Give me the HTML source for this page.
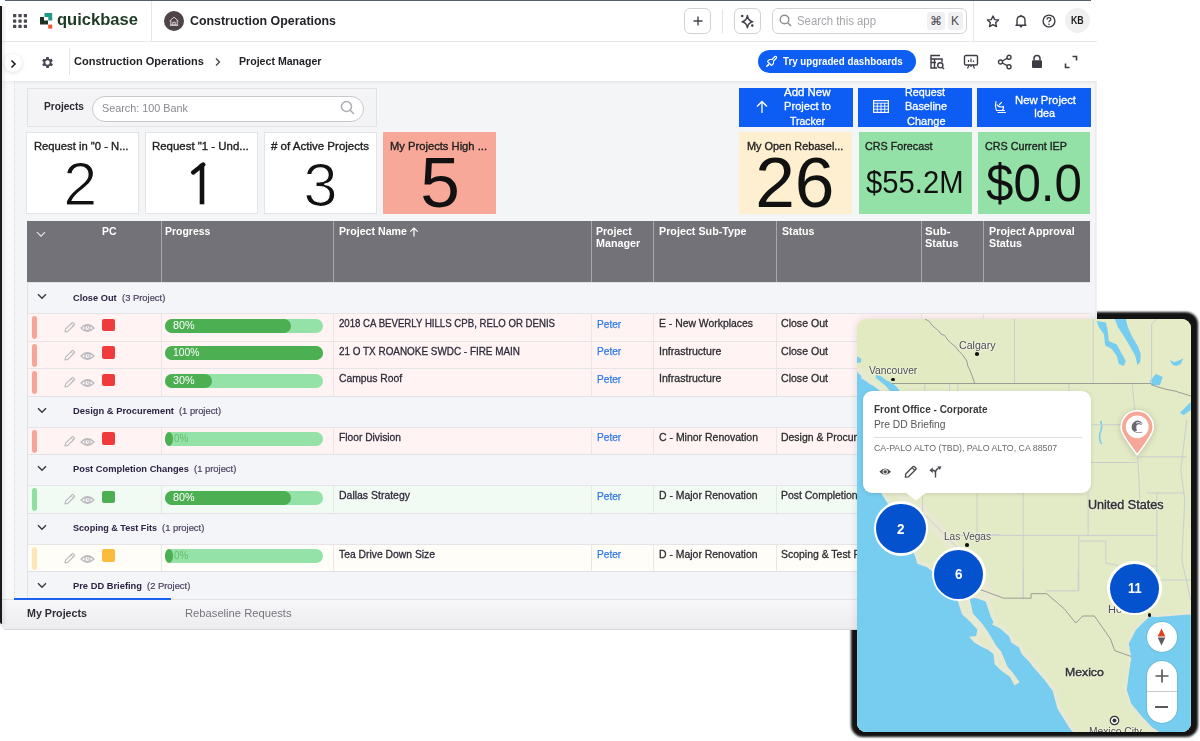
<!DOCTYPE html>
<html><head><meta charset="utf-8">
<style>
*{box-sizing:border-box;margin:0;padding:0}
html,body{width:1200px;height:741px;overflow:hidden;background:#fff;font-family:"Liberation Sans",sans-serif;color:#222}
.a{position:absolute}
.t{position:absolute;white-space:nowrap;line-height:1}
#app{position:absolute;left:0;top:0;width:1097px;height:630px;background:#f4f5f7;overflow:hidden;border-bottom-left-radius:7px}
</style></head><body>
<div class="a" style="left:851px;top:312px;width:346.5px;height:425px;background:#141414;border-radius:12px;filter:blur(1px)"></div>
<div id="app">
<div class="a" style="left:0px;top:0px;width:1097px;height:42px;background:#fff;border-bottom:1px solid #e8e8ea"></div>
<div class="a" style="left:0px;top:42px;width:1097px;height:39px;background:#fff"></div>
<div class="a" style="left:0px;top:81px;width:14px;height:549px;background:#f8f8fa"></div>
<div class="a" style="left:0px;top:81px;width:1097px;height:4px;background:linear-gradient(rgba(0,0,0,.035),rgba(0,0,0,0))"></div>
<div class="a" style="left:14px;top:81px;width:1083px;height:1px;border-top:1px dotted #d9d9dd"></div>
<div class="a" style="left:14px;top:81px;width:1px;height:548px;border-left:1px dotted #d9d9dd"></div>
<div class="a" style="left:1094.5px;top:81px;width:3px;height:548px;border-left:1px solid #ececef;border-right:1px dotted #c4c4c9;background:#f0f0f3"></div>
<svg class="a" style="left:13px;top:14px;fill:#4b4652" width="14" height="14" viewBox="0 0 14 14"><rect x="0.0" y="0.0" width="3.3" height="3.3" rx=".6"/><rect x="0.0" y="5.4" width="3.3" height="3.3" rx=".6"/><rect x="0.0" y="10.8" width="3.3" height="3.3" rx=".6"/><rect x="5.4" y="0.0" width="3.3" height="3.3" rx=".6"/><rect x="5.4" y="5.4" width="3.3" height="3.3" rx=".6"/><rect x="5.4" y="10.8" width="3.3" height="3.3" rx=".6"/><rect x="10.8" y="0.0" width="3.3" height="3.3" rx=".6"/><rect x="10.8" y="5.4" width="3.3" height="3.3" rx=".6"/><rect x="10.8" y="10.8" width="3.3" height="3.3" rx=".6"/></svg>
<svg class="a" style="left:40px;top:13px;" width="13" height="16" viewBox="0 0 13 16"><path d="M4.5 0H12.2V7.6H8.3V4H4.5Z" fill="#1f9a86"/><path d="M0 4H4V7.6H8V11.4H0Z" fill="#1c3522"/><rect x="8.2" y="11.6" width="4" height="4" fill="#f0582c"/></svg>
<div class="t" style="transform:scaleX(0.9741);transform-origin:0 0;left:57.00px;top:11px;font-size:17px;font-weight:bold;color:#1d3a22;">quickbase</div>
<div class="a" style="left:151px;top:0px;width:1px;height:41px;background:#e6e6e8"></div>
<svg class="a" style="left:164px;top:11px;" width="20" height="20" viewBox="0 0 20 20"><circle cx="10" cy="10" r="10" fill="#4e4347"/><path d="M5.5 10.2L10 6.2L14.5 10.2M6.8 9.2V14H13.2V9.2M8.8 14V11.2H11.2V14M5.8 14.3H14.2" stroke="#d9d2d4" stroke-width="1" fill="none"/></svg>
<div class="t" style="transform:scaleX(0.9535);transform-origin:0 0;left:190.00px;top:14px;font-size:13px;font-weight:bold;color:#242226;">Construction Operations</div>
<div class="a" style="left:684px;top:8px;width:27px;height:26px;border:1px solid #d2d2d6;border-radius:6px;background:#fff"></div>
<svg class="a" style="left:692.5px;top:16px;" width="10" height="10" viewBox="0 0 10 10"><path d="M5 .5V9.5M.5 5H9.5" stroke="#47434d" stroke-width="1.4"/></svg>
<div class="a" style="left:722px;top:9px;width:1px;height:24px;background:#e3e3e6"></div>
<div class="a" style="left:734px;top:8px;width:27px;height:26px;border:1px solid #d2d2d6;border-radius:6px;background:#fff"></div>
<svg class="a" style="left:740px;top:14px;" width="15" height="15" viewBox="0 0 15 15"><path d="M7.4 1.6Q8.1 6.6 12.6 7.8Q8.1 9 7.4 13.6Q6.7 9 2.2 7.8Q6.7 6.6 7.4 1.6Z" stroke="#47434d" stroke-width="1.6" fill="none" stroke-linejoin="round"/><circle cx="2.2" cy="2" r="1.3" fill="#47434d"/><circle cx="12.3" cy="11.6" r="1.3" fill="#47434d"/></svg>
<div class="a" style="left:772px;top:8px;width:195px;height:26px;border:1px solid #d2d2d6;border-radius:6px;background:#fff"></div>
<svg class="a" style="left:779px;top:14px;" width="13" height="13" viewBox="0 0 13 13"><circle cx="5.5" cy="5.5" r="4.3" stroke="#8e8c93" stroke-width="1.4" fill="none"/><path d="M8.7 8.7L12 12" stroke="#8e8c93" stroke-width="1.4"/></svg>
<div class="t" style="transform:scaleX(0.9473);transform-origin:0 0;left:797.00px;top:15px;font-size:12px;font-weight:normal;color:#a6a5aa;">Search this app</div>
<div class="a" style="left:927px;top:12px;width:18px;height:18px;background:#f0f0f2;border-radius:3px"></div>
<div class="t" style="left:930.00px;top:15px;font-size:12px;font-weight:normal;color:#4a4850;">&#8984;</div>
<div class="a" style="left:948px;top:12px;width:15px;height:18px;background:#f0f0f2;border-radius:3px"></div>
<div class="t" style="left:951.00px;top:15px;font-size:12px;font-weight:normal;color:#4a4850;">K</div>
<div class="a" style="left:973px;top:0px;width:1px;height:41px;background:#e6e6e8"></div>
<svg class="a" style="left:986px;top:15px;" width="14" height="13" viewBox="0 0 14 13"><path d="M7 1L8.7 4.6L12.6 5L9.7 7.6L10.5 11.6L7 9.6L3.5 11.6L4.3 7.6L1.4 5L5.3 4.6Z" stroke="#3e3b44" stroke-width="1.4" fill="none" stroke-linejoin="round"/></svg>
<svg class="a" style="left:1015px;top:14px;" width="12" height="14" viewBox="0 0 12 14"><path d="M2 10.5V6.5Q2 2.3 6 2.3Q10 2.3 10 6.5V10.5L11 11.2H1Z" stroke="#3e3b44" stroke-width="1.4" fill="none" stroke-linejoin="round"/><path d="M4.8 12.6H7.2" stroke="#3e3b44" stroke-width="1.6"/><path d="M6 1V2.3" stroke="#3e3b44" stroke-width="1.4"/></svg>
<svg class="a" style="left:1042px;top:14px;" width="14" height="14" viewBox="0 0 14 14"><circle cx="7" cy="7" r="5.9" stroke="#3e3b44" stroke-width="1.4" fill="none"/><path d="M5.1 5.4Q5.1 3.6 7 3.6Q8.9 3.6 8.9 5.2Q8.9 6.3 7.6 6.9Q7 7.2 7 8.3" stroke="#3e3b44" stroke-width="1.3" fill="none"/><circle cx="7" cy="10.2" r=".8" fill="#3e3b44"/></svg>
<div class="a" style="left:1065px;top:8px;width:25px;height:25px;border-radius:50%;background:#f0f0f1"></div>
<div class="t" style="transform:scaleX(0.8787);transform-origin:0 0;left:1071.30px;top:16px;font-size:10px;font-weight:bold;color:#1b1b1b;">KB</div>
<div class="a" style="left:4px;top:54.3px;width:18px;height:18px;border-radius:50%;background:#fff;box-shadow:0 1px 4px rgba(0,0,0,.14)"></div>
<svg class="a" style="left:10px;top:58.5px;" width="7" height="10" viewBox="0 0 7 10"><path d="M1.5 1.5L5 5L1.5 8.5" stroke="#1e1e22" stroke-width="1.6" fill="none"/></svg>
<svg class="a" style="left:39.5px;top:54.8px;" width="15" height="15" viewBox="0 0 24 24"><path fill="#4b4652" d="M19.4 13a7.5 7.5 0 0 0 0-2l2.1-1.6-2-3.5-2.5 1a7.6 7.6 0 0 0-1.7-1L15 3.3h-4l-.4 2.6a7.6 7.6 0 0 0-1.7 1l-2.5-1-2 3.5L6.6 11a7.5 7.5 0 0 0 0 2l-2.1 1.6 2 3.5 2.5-1a7.6 7.6 0 0 0 1.7 1l.4 2.6h4l.4-2.6a7.6 7.6 0 0 0 1.7-1l2.5 1 2-3.5zM13 15.5a3.5 3.5 0 1 1 0-7 3.5 3.5 0 0 1 0 7z" transform="translate(-1 0)"/></svg>
<div class="a" style="left:69px;top:48px;width:1px;height:27px;background:#e4e4e6"></div>
<div class="t" style="transform:scaleX(0.9597);transform-origin:0 0;left:74.00px;top:56px;font-size:11.5px;font-weight:bold;color:#242226;">Construction Operations</div>
<svg class="a" style="left:214px;top:56.8px;" width="8" height="10" viewBox="0 0 8 10"><path d="M2 1.5L5.5 5L2 8.5" stroke="#4b4652" stroke-width="1.4" fill="none"/></svg>
<div class="t" style="transform:scaleX(0.9219);transform-origin:0 0;left:238.50px;top:56px;font-size:11.5px;font-weight:bold;color:#242226;">Project Manager</div>
<div class="a" style="left:758px;top:50px;width:158px;height:23px;border-radius:12px;background:#0e5ef3"></div>
<svg class="a" style="left:765px;top:55px;" width="13" height="13" viewBox="0 0 13 13"><path d="M4.5 8.5L2.5 6.5L4.5 4.5H7L10 1.5Q12 1 11.5 3L8.5 6V8.5L6.5 10.5ZM4.2 9.2Q2.5 9 1.5 11.5Q4 10.5 3.8 8.8" stroke="#fff" stroke-width="1.1" fill="none" stroke-linejoin="round"/></svg>
<div class="t" style="transform:scaleX(0.8861);transform-origin:0 0;left:783.30px;top:56px;font-size:11px;font-weight:bold;color:#fff;">Try upgraded dashboards</div>
<svg class="a" style="left:929px;top:54px;" width="16" height="16" viewBox="0 0 16 16"><path d="M11 1.5H2V14H8M2 5H13V8M2 8.5H7M5.5 5V14" stroke="#3e3b44" stroke-width="1.4" fill="none"/><circle cx="11.3" cy="11.3" r="2.6" stroke="#3e3b44" stroke-width="1.4" fill="none"/><path d="M13.2 13.2L15 15" stroke="#3e3b44" stroke-width="1.4"/></svg>
<svg class="a" style="left:963px;top:54px;" width="16" height="16" viewBox="0 0 16 16"><rect x="1.5" y="1.5" width="13" height="9.5" rx="1.3" stroke="#3e3b44" stroke-width="1.4" fill="none"/><path d="M5.5 8V6M8 8V4.5M10.5 8V6.5M6 11L4.5 14.5M10 11L11.5 14.5M8 11V13" stroke="#3e3b44" stroke-width="1.2"/></svg>
<svg class="a" style="left:997px;top:54px;" width="16" height="16" viewBox="0 0 16 16"><circle cx="12" cy="3.3" r="2" stroke="#3e3b44" stroke-width="1.4" fill="none"/><circle cx="3.5" cy="8" r="2" stroke="#3e3b44" stroke-width="1.4" fill="none"/><circle cx="12" cy="12.7" r="2" stroke="#3e3b44" stroke-width="1.4" fill="none"/><path d="M5.3 7L10.2 4.3M5.3 9L10.2 11.7" stroke="#3e3b44" stroke-width="1.4"/></svg>
<svg class="a" style="left:1031px;top:54px;" width="12" height="15" viewBox="0 0 12 15"><path d="M3 6.5V4.5Q3 1.5 6 1.5Q9 1.5 9 4.5V6.5" stroke="#3e3b44" stroke-width="1.5" fill="none"/><rect x="1" y="6.2" width="10" height="7.8" rx="1" fill="#3e3b44"/></svg>
<svg class="a" style="left:1064px;top:55px;" width="14" height="14" viewBox="0 0 14 14"><path d="M8.5 1.5H12.5V5.5M5.5 12.5H1.5V8.5" stroke="#3e3b44" stroke-width="1.6" fill="none"/></svg>
<div class="a" style="left:26.5px;top:87.5px;width:350px;height:39px;background:#f4f4f6;border:1px solid #e3e3e7"></div>
<div class="t" style="transform:scaleX(0.9388);transform-origin:0 0;left:44.40px;top:101px;font-size:10.8px;font-weight:bold;color:#2a2830;">Projects</div>
<div class="a" style="left:91.5px;top:95.5px;width:272.5px;height:26px;background:#fff;border:1px solid #c9c8cd;border-radius:13px"></div>
<div class="t" style="transform:scaleX(0.9670);transform-origin:0 0;left:101.60px;top:103px;font-size:11.2px;font-weight:normal;color:#8a8990;">Search: 100 Bank</div>
<svg class="a" style="left:340px;top:100px;" width="15" height="15" viewBox="0 0 15 15"><circle cx="6.5" cy="6.5" r="5" stroke="#aeadb3" stroke-width="1.5" fill="none"/><path d="M10.2 10.2L13.5 13.5" stroke="#aeadb3" stroke-width="1.6" stroke-linecap="round"/></svg>
<div class="a" style="left:739.2px;top:87.5px;width:113.5px;height:39px;background:#0d5cf4"></div>
<div class="a" style="left:858.2px;top:87.5px;width:113.5px;height:39px;background:#0d5cf4"></div>
<div class="a" style="left:977.2px;top:87.5px;width:113.5px;height:39px;background:#0d5cf4"></div>
<svg class="a" style="left:755px;top:100px;" width="14" height="14" viewBox="0 0 14 14"><path d="M7 13V1.5M2 6.5L7 1.5L12 6.5" stroke="#fff" stroke-width="1.3" fill="none"/></svg>
<div class="t" style="transform:scaleX(1.0613);transform-origin:0 0;left:783.70px;top:87px;font-size:10.8px;font-weight:normal;color:#fff;-webkit-text-stroke:.3px #fff;">Add New</div>
<div class="t" style="transform:scaleX(1.0305);transform-origin:0 0;left:783.50px;top:101px;font-size:10.8px;font-weight:normal;color:#fff;-webkit-text-stroke:.3px #fff;">Project to</div>
<div class="t" style="transform:scaleX(0.9668);transform-origin:0 0;left:789.50px;top:116px;font-size:10.8px;font-weight:normal;color:#fff;-webkit-text-stroke:.3px #fff;">Tracker</div>
<svg class="a" style="left:873px;top:100px;" width="16" height="13" viewBox="0 0 16 13"><rect x=".6" y=".6" width="14.8" height="11.8" fill="none" stroke="#fff" stroke-width="1.2"/><path d="M.6 3.2H15.4M.6 6.2H15.4M.6 9.2H15.4M4.3 3V12.4M8 3V12.4M11.7 3V12.4" stroke="#fff" stroke-width=".9"/></svg>
<div class="t" style="transform:scaleX(0.9946);transform-origin:0 0;left:905.00px;top:87px;font-size:10.8px;font-weight:normal;color:#fff;-webkit-text-stroke:.3px #fff;">Request</div>
<div class="t" style="transform:scaleX(1.0140);transform-origin:0 0;left:905.40px;top:101px;font-size:10.8px;font-weight:normal;color:#fff;-webkit-text-stroke:.3px #fff;">Baseline</div>
<div class="t" style="transform:scaleX(1.0178);transform-origin:0 0;left:906.50px;top:116px;font-size:10.8px;font-weight:normal;color:#fff;-webkit-text-stroke:.3px #fff;">Change</div>
<svg class="a" style="left:993px;top:100px;" width="14" height="14" viewBox="0 0 14 14"><path d="M3 1.5Q1.5 6 3.5 10.5H11.5M5 12.5H12.5M4 5Q7 8 10.5 6.5Q11 9 9 10.5M6.5 4.5L8.5 2.5" stroke="#fff" stroke-width="1.1" fill="none" stroke-linecap="round"/></svg>
<div class="t" style="transform:scaleX(1.0481);transform-origin:0 0;left:1014.50px;top:95px;font-size:10.8px;font-weight:normal;color:#fff;-webkit-text-stroke:.3px #fff;">New Project</div>
<div class="t" style="transform:scaleX(0.9993);transform-origin:0 0;left:1033.50px;top:108px;font-size:10.8px;font-weight:normal;color:#fff;-webkit-text-stroke:.3px #fff;">Idea</div>
<div class="a" style="left:739px;top:126.6px;width:352px;height:5px;background:#f4f5f7"></div>
<div class="a" style="left:26.3px;top:132.3px;width:113px;height:82px;background:#fff;border:1px solid #e3e4e8"></div>
<div class="t" style="transform:scaleX(1.0038);transform-origin:0 0;left:33.70px;top:141px;font-size:11.2px;font-weight:normal;color:#1e1e1e;-webkit-text-stroke:.35px #1e1e1e;">Request in "0 - N...</div>
<div class="t" style="left:63.22px;top:154px;font-size:61.1px;font-weight:normal;color:#111;-webkit-text-stroke:1.2px #fff;">2</div>
<div class="a" style="left:145.3px;top:132.3px;width:113px;height:82px;background:#fff;border:1px solid #e3e4e8"></div>
<div class="t" style="transform:scaleX(1.0215);transform-origin:0 0;left:152.00px;top:141px;font-size:11.2px;font-weight:normal;color:#1e1e1e;-webkit-text-stroke:.35px #1e1e1e;">Request "1 - Und...</div>
<svg class="a" style="left:190px;top:162px;" width="20" height="44" viewBox="0 0 20 44"><path d="M12 1.8V42.3" stroke="#111" stroke-width="4.6"/><path d="M13.2 2.6L3.2 10.4" stroke="#111" stroke-width="4.4" stroke-linecap="round"/></svg>
<div class="a" style="left:264.3px;top:132.3px;width:113px;height:82px;background:#fff;border:1px solid #e3e4e8"></div>
<div class="t" style="transform:scaleX(1.0301);transform-origin:0 0;left:271.00px;top:141px;font-size:11.2px;font-weight:normal;color:#1e1e1e;-webkit-text-stroke:.35px #1e1e1e;"># of Active Projects</div>
<div class="t" style="left:303.62px;top:155px;font-size:61.1px;font-weight:normal;color:#111;-webkit-text-stroke:1.2px #fff;">3</div>
<div class="a" style="left:383.3px;top:132.3px;width:113px;height:82px;background:#f8a898;border:1px solid #f8a898"></div>
<div class="t" style="transform:scaleX(1.0002);transform-origin:0 0;left:390.00px;top:141px;font-size:11.2px;font-weight:normal;color:#1e1e1e;-webkit-text-stroke:.35px #1e1e1e;">My Projects High ...</div>
<div class="t" style="left:420.21px;top:147px;font-size:71.3px;font-weight:normal;color:#111;">5</div>
<div class="a" style="left:739.3px;top:132.3px;width:113px;height:82px;background:#fdefcf;border:1px solid #fdefcf"></div>
<div class="t" style="transform:scaleX(0.9750);transform-origin:0 0;left:746.60px;top:141px;font-size:11.2px;font-weight:normal;color:#1e1e1e;-webkit-text-stroke:.35px #1e1e1e;">My Open Rebasel...</div>
<div class="t" style="left:755.21px;top:147px;font-size:71.3px;font-weight:normal;color:#111;">26</div>
<div class="a" style="left:858.5px;top:132.3px;width:113px;height:82px;background:#94e1a8"></div>
<div class="t" style="transform:scaleX(0.9623);transform-origin:0 0;left:865.40px;top:141px;font-size:11.2px;font-weight:normal;color:#1e1e1e;-webkit-text-stroke:.35px #1e1e1e;">CRS Forecast</div>
<div class="t" style="transform:scaleX(0.9584);transform-origin:0 0;left:865.50px;top:167px;font-size:30.5px;font-weight:normal;color:#111;">$55.2M</div>
<div class="a" style="left:977.5px;top:132.3px;width:112.5px;height:82px;background:#94e1a8"></div>
<div class="t" style="transform:scaleX(0.9626);transform-origin:0 0;left:984.70px;top:141px;font-size:11.2px;font-weight:normal;color:#1e1e1e;-webkit-text-stroke:.35px #1e1e1e;">CRS Current IEP</div>
<div class="t" style="transform:scaleX(0.9394);transform-origin:0 0;left:985.50px;top:157px;font-size:52.5px;font-weight:normal;color:#111;">$0.0</div>
<div class="a" style="left:26.5px;top:221.2px;width:1063.5px;height:60.8px;background:#737278"></div>
<div class="a" style="left:160.5px;top:221.2px;width:1px;height:60.8px;background:#a9a8ae"></div>
<div class="a" style="left:333.3px;top:221.2px;width:1px;height:60.8px;background:#a9a8ae"></div>
<div class="a" style="left:590.7px;top:221.2px;width:1px;height:60.8px;background:#a9a8ae"></div>
<div class="a" style="left:653.2px;top:221.2px;width:1px;height:60.8px;background:#a9a8ae"></div>
<div class="a" style="left:775.8px;top:221.2px;width:1px;height:60.8px;background:#a9a8ae"></div>
<div class="a" style="left:920.5px;top:221.2px;width:1px;height:60.8px;background:#a9a8ae"></div>
<div class="a" style="left:983.4px;top:221.2px;width:1px;height:60.8px;background:#a9a8ae"></div>
<svg class="a" style="left:36px;top:231px;" width="10" height="7" viewBox="0 0 10 7"><path d="M1 1.2L5 5.2L9 1.2" stroke="#e6e6ea" stroke-width="1.2" fill="none"/></svg>
<div class="t" style="transform:scaleX(0.9851);transform-origin:0 0;left:102.00px;top:226px;font-size:10.6px;font-weight:bold;color:#fff;">PC</div>
<div class="t" style="transform:scaleX(0.9883);transform-origin:0 0;left:165.30px;top:226px;font-size:10.6px;font-weight:bold;color:#fff;">Progress</div>
<div class="t" style="transform:scaleX(1.0042);transform-origin:0 0;left:339.00px;top:226px;font-size:10.6px;font-weight:bold;color:#fff;">Project Name</div>
<svg class="a" style="left:409px;top:227px;" width="10" height="10" viewBox="0 0 10 10"><path d="M5 9.5V1M1.3 4.7L5 1L8.7 4.7" stroke="#fff" stroke-width="1.2" fill="none"/></svg>
<div class="t" style="transform:scaleX(0.9938);transform-origin:0 0;left:596.30px;top:226px;font-size:10.6px;font-weight:bold;color:#fff;">Project</div>
<div class="t" style="transform:scaleX(1.0143);transform-origin:0 0;left:596.30px;top:238px;font-size:10.6px;font-weight:bold;color:#fff;">Manager</div>
<div class="t" style="transform:scaleX(1.0145);transform-origin:0 0;left:659.40px;top:226px;font-size:10.6px;font-weight:bold;color:#fff;">Project Sub-Type</div>
<div class="t" style="transform:scaleX(1.0034);transform-origin:0 0;left:781.50px;top:226px;font-size:10.6px;font-weight:bold;color:#fff;">Status</div>
<div class="t" style="transform:scaleX(1.0872);transform-origin:0 0;left:925.40px;top:226px;font-size:10.6px;font-weight:bold;color:#fff;">Sub-</div>
<div class="t" style="transform:scaleX(1.0373);transform-origin:0 0;left:925.40px;top:238px;font-size:10.6px;font-weight:bold;color:#fff;">Status</div>
<div class="t" style="transform:scaleX(1.0167);transform-origin:0 0;left:989.00px;top:226px;font-size:10.6px;font-weight:bold;color:#fff;">Project Approval</div>
<div class="t" style="transform:scaleX(1.0188);transform-origin:0 0;left:989.00px;top:238px;font-size:10.6px;font-weight:bold;color:#fff;">Status</div>
<div class="a" style="left:26.5px;top:282.0px;width:1063.5px;height:31px;background:#f4f5f8"></div>
<div class="a" style="left:26.5px;top:282.0px;width:1063.5px;height:1px;background:#e2e2e6"></div>
<svg class="a" style="left:36.5px;top:293.0px;" width="10" height="7" viewBox="0 0 10 7"><path d="M1 1.2L5 5.2L9 1.2" stroke="#3a3840" stroke-width="1.4" fill="none"/></svg>
<div class="t" style="transform:scaleX(0.9421);transform-origin:0 0;left:73.40px;top:293px;font-size:9.8px;font-weight:bold;color:#2d2344;">Close Out</div>
<div class="t" style="transform:scaleX(0.9582);transform-origin:0 0;left:121.50px;top:293px;font-size:9.8px;font-weight:normal;color:#4a4060;-webkit-text-stroke:.2px #4a4060;">(3 Project)</div>
<div class="a" style="left:26.5px;top:313.0px;width:1063.5px;height:27.5px;background:#fff4f3"></div>
<div class="a" style="left:26.5px;top:313.0px;width:1063.5px;height:1px;background:#e6e4e7"></div>
<div class="a" style="left:160.5px;top:313.0px;width:1px;height:27.5px;background:#e8e6e8"></div>
<div class="a" style="left:333.3px;top:313.0px;width:1px;height:27.5px;background:#e8e6e8"></div>
<div class="a" style="left:590.7px;top:313.0px;width:1px;height:27.5px;background:#e8e6e8"></div>
<div class="a" style="left:653.2px;top:313.0px;width:1px;height:27.5px;background:#e8e6e8"></div>
<div class="a" style="left:775.8px;top:313.0px;width:1px;height:27.5px;background:#e8e6e8"></div>
<div class="a" style="left:920.5px;top:313.0px;width:1px;height:27.5px;background:#e8e6e8"></div>
<div class="a" style="left:983.4px;top:313.0px;width:1px;height:27.5px;background:#e8e6e8"></div>
<div class="a" style="left:32.3px;top:316.0px;width:4.8px;height:23px;background:#f6a596;border-radius:2.4px"></div>
<svg class="a" style="left:63px;top:322.0px;" width="13" height="11" viewBox="0 0 13 11"><path d="M2 9.8L2.6 7.2L9 0.8Q9.7 .2 10.4 .8L11.2 1.6Q11.8 2.3 11.2 3L4.8 9.4L2.2 10Z" stroke="#b9b8bd" stroke-width="1.1" fill="none" stroke-linejoin="round"/><path d="M8.2 1.8L10.2 3.8" stroke="#b9b8bd" stroke-width="1"/></svg>
<svg class="a" style="left:79.5px;top:323.0px;" width="15" height="10" viewBox="0 0 15 10"><path d="M1 5Q7.5 -1.5 14 5Q7.5 11.5 1 5Z" stroke="#b9b8bd" stroke-width="1.2" fill="none"/><circle cx="7.5" cy="5" r="2.6" stroke="#b9b8bd" stroke-width="1.1" fill="none"/><path d="M7.5 3.6V5.2H8.8" stroke="#b9b8bd" stroke-width=".9" fill="none"/></svg>
<div class="a" style="left:102.1px;top:318.7px;width:13px;height:12.8px;background:#ef3b3b;border-radius:2px"></div>
<div class="a" style="left:164.8px;top:318.7px;width:158px;height:14.3px;background:#94e2a7;border-radius:7.2px"></div>
<div class="a" style="left:164.8px;top:318.7px;width:126.4px;height:14.3px;background:#4caf51;border-radius:7.2px"></div>
<div class="t" style="transform:scaleX(1.0386);transform-origin:0 0;left:173.20px;top:321px;font-size:10.4px;font-weight:normal;color:#fff;">80%</div>
<div class="t" style="transform:scaleX(0.8759);transform-origin:0 0;left:338.80px;top:318px;font-size:11px;font-weight:normal;color:#2e2a3a;-webkit-text-stroke:.3px #2e2a3a;">2018 CA BEVERLY HILLS CPB, RELO OR DENIS</div>
<div class="t" style="transform:scaleX(0.9203);transform-origin:0 0;left:596.80px;top:319px;font-size:11px;font-weight:normal;color:#2f7ae5;-webkit-text-stroke:.25px #2f7ae5;">Peter</div>
<div class="t" style="transform:scaleX(0.9453);transform-origin:0 0;left:659.20px;top:318px;font-size:11px;font-weight:normal;color:#2c2c30;-webkit-text-stroke:.3px #2c2c30;">E - New Workplaces</div>
<div class="t" style="transform:scaleX(0.9607);transform-origin:0 0;left:781.20px;top:318px;font-size:11px;font-weight:normal;color:#2c2c30;-webkit-text-stroke:.3px #2c2c30;">Close Out</div>
<div class="a" style="left:26.5px;top:340.5px;width:1063.5px;height:27.5px;background:#fff4f3"></div>
<div class="a" style="left:26.5px;top:340.5px;width:1063.5px;height:1px;background:#e6e4e7"></div>
<div class="a" style="left:160.5px;top:340.5px;width:1px;height:27.5px;background:#e8e6e8"></div>
<div class="a" style="left:333.3px;top:340.5px;width:1px;height:27.5px;background:#e8e6e8"></div>
<div class="a" style="left:590.7px;top:340.5px;width:1px;height:27.5px;background:#e8e6e8"></div>
<div class="a" style="left:653.2px;top:340.5px;width:1px;height:27.5px;background:#e8e6e8"></div>
<div class="a" style="left:775.8px;top:340.5px;width:1px;height:27.5px;background:#e8e6e8"></div>
<div class="a" style="left:920.5px;top:340.5px;width:1px;height:27.5px;background:#e8e6e8"></div>
<div class="a" style="left:983.4px;top:340.5px;width:1px;height:27.5px;background:#e8e6e8"></div>
<div class="a" style="left:32.3px;top:343.5px;width:4.8px;height:23px;background:#f6a596;border-radius:2.4px"></div>
<svg class="a" style="left:63px;top:349.5px;" width="13" height="11" viewBox="0 0 13 11"><path d="M2 9.8L2.6 7.2L9 0.8Q9.7 .2 10.4 .8L11.2 1.6Q11.8 2.3 11.2 3L4.8 9.4L2.2 10Z" stroke="#b9b8bd" stroke-width="1.1" fill="none" stroke-linejoin="round"/><path d="M8.2 1.8L10.2 3.8" stroke="#b9b8bd" stroke-width="1"/></svg>
<svg class="a" style="left:79.5px;top:350.5px;" width="15" height="10" viewBox="0 0 15 10"><path d="M1 5Q7.5 -1.5 14 5Q7.5 11.5 1 5Z" stroke="#b9b8bd" stroke-width="1.2" fill="none"/><circle cx="7.5" cy="5" r="2.6" stroke="#b9b8bd" stroke-width="1.1" fill="none"/><path d="M7.5 3.6V5.2H8.8" stroke="#b9b8bd" stroke-width=".9" fill="none"/></svg>
<div class="a" style="left:102.1px;top:346.2px;width:13px;height:12.8px;background:#ef3b3b;border-radius:2px"></div>
<div class="a" style="left:164.8px;top:346.2px;width:158px;height:14.3px;background:#94e2a7;border-radius:7.2px"></div>
<div class="a" style="left:164.8px;top:346.2px;width:158.0px;height:14.3px;background:#4caf51;border-radius:7.2px"></div>
<div class="t" style="transform:scaleX(0.9933);transform-origin:0 0;left:173.20px;top:348px;font-size:10.4px;font-weight:normal;color:#fff;">100%</div>
<div class="t" style="transform:scaleX(0.9010);transform-origin:0 0;left:338.80px;top:346px;font-size:11px;font-weight:normal;color:#2e2a3a;-webkit-text-stroke:.3px #2e2a3a;">21 O TX ROANOKE SWDC - FIRE MAIN</div>
<div class="t" style="transform:scaleX(0.9203);transform-origin:0 0;left:596.80px;top:346px;font-size:11px;font-weight:normal;color:#2f7ae5;-webkit-text-stroke:.25px #2f7ae5;">Peter</div>
<div class="t" style="transform:scaleX(0.9612);transform-origin:0 0;left:659.20px;top:346px;font-size:11px;font-weight:normal;color:#2c2c30;-webkit-text-stroke:.3px #2c2c30;">Infrastructure</div>
<div class="t" style="transform:scaleX(0.9607);transform-origin:0 0;left:781.20px;top:346px;font-size:11px;font-weight:normal;color:#2c2c30;-webkit-text-stroke:.3px #2c2c30;">Close Out</div>
<div class="a" style="left:26.5px;top:368.0px;width:1063.5px;height:27.5px;background:#fff4f3"></div>
<div class="a" style="left:26.5px;top:368.0px;width:1063.5px;height:1px;background:#e6e4e7"></div>
<div class="a" style="left:160.5px;top:368.0px;width:1px;height:27.5px;background:#e8e6e8"></div>
<div class="a" style="left:333.3px;top:368.0px;width:1px;height:27.5px;background:#e8e6e8"></div>
<div class="a" style="left:590.7px;top:368.0px;width:1px;height:27.5px;background:#e8e6e8"></div>
<div class="a" style="left:653.2px;top:368.0px;width:1px;height:27.5px;background:#e8e6e8"></div>
<div class="a" style="left:775.8px;top:368.0px;width:1px;height:27.5px;background:#e8e6e8"></div>
<div class="a" style="left:920.5px;top:368.0px;width:1px;height:27.5px;background:#e8e6e8"></div>
<div class="a" style="left:983.4px;top:368.0px;width:1px;height:27.5px;background:#e8e6e8"></div>
<div class="a" style="left:32.3px;top:371.0px;width:4.8px;height:23px;background:#f6a596;border-radius:2.4px"></div>
<svg class="a" style="left:63px;top:377.0px;" width="13" height="11" viewBox="0 0 13 11"><path d="M2 9.8L2.6 7.2L9 0.8Q9.7 .2 10.4 .8L11.2 1.6Q11.8 2.3 11.2 3L4.8 9.4L2.2 10Z" stroke="#b9b8bd" stroke-width="1.1" fill="none" stroke-linejoin="round"/><path d="M8.2 1.8L10.2 3.8" stroke="#b9b8bd" stroke-width="1"/></svg>
<svg class="a" style="left:79.5px;top:378.0px;" width="15" height="10" viewBox="0 0 15 10"><path d="M1 5Q7.5 -1.5 14 5Q7.5 11.5 1 5Z" stroke="#b9b8bd" stroke-width="1.2" fill="none"/><circle cx="7.5" cy="5" r="2.6" stroke="#b9b8bd" stroke-width="1.1" fill="none"/><path d="M7.5 3.6V5.2H8.8" stroke="#b9b8bd" stroke-width=".9" fill="none"/></svg>
<div class="a" style="left:102.1px;top:373.7px;width:13px;height:12.8px;background:#ef3b3b;border-radius:2px"></div>
<div class="a" style="left:164.8px;top:373.7px;width:158px;height:14.3px;background:#94e2a7;border-radius:7.2px"></div>
<div class="a" style="left:164.8px;top:373.7px;width:47.4px;height:14.3px;background:#4caf51;border-radius:7.2px"></div>
<div class="t" style="transform:scaleX(1.0386);transform-origin:0 0;left:173.20px;top:376px;font-size:10.4px;font-weight:normal;color:#fff;">30%</div>
<div class="t" style="transform:scaleX(0.9396);transform-origin:0 0;left:338.80px;top:373px;font-size:11px;font-weight:normal;color:#2e2a3a;-webkit-text-stroke:.3px #2e2a3a;">Campus Roof</div>
<div class="t" style="transform:scaleX(0.9203);transform-origin:0 0;left:596.80px;top:374px;font-size:11px;font-weight:normal;color:#2f7ae5;-webkit-text-stroke:.25px #2f7ae5;">Peter</div>
<div class="t" style="transform:scaleX(0.9612);transform-origin:0 0;left:659.20px;top:373px;font-size:11px;font-weight:normal;color:#2c2c30;-webkit-text-stroke:.3px #2c2c30;">Infrastructure</div>
<div class="t" style="transform:scaleX(0.9607);transform-origin:0 0;left:781.20px;top:373px;font-size:11px;font-weight:normal;color:#2c2c30;-webkit-text-stroke:.3px #2c2c30;">Close Out</div>
<div class="a" style="left:26.5px;top:395.5px;width:1063.5px;height:31px;background:#f4f5f8"></div>
<div class="a" style="left:26.5px;top:395.5px;width:1063.5px;height:1px;background:#e2e2e6"></div>
<svg class="a" style="left:36.5px;top:406.5px;" width="10" height="7" viewBox="0 0 10 7"><path d="M1 1.2L5 5.2L9 1.2" stroke="#3a3840" stroke-width="1.4" fill="none"/></svg>
<div class="t" style="transform:scaleX(0.9562);transform-origin:0 0;left:73.40px;top:406px;font-size:9.8px;font-weight:bold;color:#2d2344;">Design &amp; Procurement</div>
<div class="t" style="transform:scaleX(0.9522);transform-origin:0 0;left:179.00px;top:406px;font-size:9.8px;font-weight:normal;color:#4a4060;-webkit-text-stroke:.2px #4a4060;">(1 project)</div>
<div class="a" style="left:26.5px;top:426.5px;width:1063.5px;height:27.5px;background:#fff4f3"></div>
<div class="a" style="left:26.5px;top:426.5px;width:1063.5px;height:1px;background:#e6e4e7"></div>
<div class="a" style="left:160.5px;top:426.5px;width:1px;height:27.5px;background:#e8e6e8"></div>
<div class="a" style="left:333.3px;top:426.5px;width:1px;height:27.5px;background:#e8e6e8"></div>
<div class="a" style="left:590.7px;top:426.5px;width:1px;height:27.5px;background:#e8e6e8"></div>
<div class="a" style="left:653.2px;top:426.5px;width:1px;height:27.5px;background:#e8e6e8"></div>
<div class="a" style="left:775.8px;top:426.5px;width:1px;height:27.5px;background:#e8e6e8"></div>
<div class="a" style="left:920.5px;top:426.5px;width:1px;height:27.5px;background:#e8e6e8"></div>
<div class="a" style="left:983.4px;top:426.5px;width:1px;height:27.5px;background:#e8e6e8"></div>
<div class="a" style="left:32.3px;top:429.5px;width:4.8px;height:23px;background:#f6a596;border-radius:2.4px"></div>
<svg class="a" style="left:63px;top:435.5px;" width="13" height="11" viewBox="0 0 13 11"><path d="M2 9.8L2.6 7.2L9 0.8Q9.7 .2 10.4 .8L11.2 1.6Q11.8 2.3 11.2 3L4.8 9.4L2.2 10Z" stroke="#b9b8bd" stroke-width="1.1" fill="none" stroke-linejoin="round"/><path d="M8.2 1.8L10.2 3.8" stroke="#b9b8bd" stroke-width="1"/></svg>
<svg class="a" style="left:79.5px;top:436.5px;" width="15" height="10" viewBox="0 0 15 10"><path d="M1 5Q7.5 -1.5 14 5Q7.5 11.5 1 5Z" stroke="#b9b8bd" stroke-width="1.2" fill="none"/><circle cx="7.5" cy="5" r="2.6" stroke="#b9b8bd" stroke-width="1.1" fill="none"/><path d="M7.5 3.6V5.2H8.8" stroke="#b9b8bd" stroke-width=".9" fill="none"/></svg>
<div class="a" style="left:102.1px;top:432.2px;width:13px;height:12.8px;background:#ef3b3b;border-radius:2px"></div>
<div class="a" style="left:164.8px;top:432.2px;width:158px;height:14.3px;background:#94e2a7;border-radius:7.2px"></div>
<div class="a" style="left:164.8px;top:432.2px;width:8.5px;height:14.3px;background:#4caf51;border-radius:50%"></div>
<div class="t" style="transform:scaleX(0.9514);transform-origin:0 0;left:173.70px;top:434px;font-size:10.4px;font-weight:normal;color:#62bd6e;">0%</div>
<div class="t" style="transform:scaleX(0.9304);transform-origin:0 0;left:338.80px;top:432px;font-size:11px;font-weight:normal;color:#2e2a3a;-webkit-text-stroke:.3px #2e2a3a;">Floor Division</div>
<div class="t" style="transform:scaleX(0.9203);transform-origin:0 0;left:596.80px;top:432px;font-size:11px;font-weight:normal;color:#2f7ae5;-webkit-text-stroke:.25px #2f7ae5;">Peter</div>
<div class="t" style="transform:scaleX(0.9525);transform-origin:0 0;left:659.20px;top:432px;font-size:11px;font-weight:normal;color:#2c2c30;-webkit-text-stroke:.3px #2c2c30;">C - Minor Renovation</div>
<div class="t" style="left:781.20px;top:432px;font-size:11px;font-weight:normal;color:#2c2c30;-webkit-text-stroke:.3px #2c2c30;transform:scaleX(0.95);transform-origin:0 0;">Design &amp; Procurement</div>
<div class="a" style="left:26.5px;top:454.0px;width:1063.5px;height:31px;background:#f4f5f8"></div>
<div class="a" style="left:26.5px;top:454.0px;width:1063.5px;height:1px;background:#e2e2e6"></div>
<svg class="a" style="left:36.5px;top:465.0px;" width="10" height="7" viewBox="0 0 10 7"><path d="M1 1.2L5 5.2L9 1.2" stroke="#3a3840" stroke-width="1.4" fill="none"/></svg>
<div class="t" style="transform:scaleX(0.9513);transform-origin:0 0;left:73.40px;top:464px;font-size:9.8px;font-weight:bold;color:#2d2344;">Post Completion Changes</div>
<div class="t" style="transform:scaleX(0.9590);transform-origin:0 0;left:193.70px;top:464px;font-size:9.8px;font-weight:normal;color:#4a4060;-webkit-text-stroke:.2px #4a4060;">(1 project)</div>
<div class="a" style="left:26.5px;top:485.0px;width:1063.5px;height:27.5px;background:#f2faf4"></div>
<div class="a" style="left:26.5px;top:485.0px;width:1063.5px;height:1px;background:#e6e4e7"></div>
<div class="a" style="left:160.5px;top:485.0px;width:1px;height:27.5px;background:#e8e6e8"></div>
<div class="a" style="left:333.3px;top:485.0px;width:1px;height:27.5px;background:#e8e6e8"></div>
<div class="a" style="left:590.7px;top:485.0px;width:1px;height:27.5px;background:#e8e6e8"></div>
<div class="a" style="left:653.2px;top:485.0px;width:1px;height:27.5px;background:#e8e6e8"></div>
<div class="a" style="left:775.8px;top:485.0px;width:1px;height:27.5px;background:#e8e6e8"></div>
<div class="a" style="left:920.5px;top:485.0px;width:1px;height:27.5px;background:#e8e6e8"></div>
<div class="a" style="left:983.4px;top:485.0px;width:1px;height:27.5px;background:#e8e6e8"></div>
<div class="a" style="left:32.3px;top:488.0px;width:4.8px;height:23px;background:#8fdfa2;border-radius:2.4px"></div>
<svg class="a" style="left:63px;top:494.0px;" width="13" height="11" viewBox="0 0 13 11"><path d="M2 9.8L2.6 7.2L9 0.8Q9.7 .2 10.4 .8L11.2 1.6Q11.8 2.3 11.2 3L4.8 9.4L2.2 10Z" stroke="#b9b8bd" stroke-width="1.1" fill="none" stroke-linejoin="round"/><path d="M8.2 1.8L10.2 3.8" stroke="#b9b8bd" stroke-width="1"/></svg>
<svg class="a" style="left:79.5px;top:495.0px;" width="15" height="10" viewBox="0 0 15 10"><path d="M1 5Q7.5 -1.5 14 5Q7.5 11.5 1 5Z" stroke="#b9b8bd" stroke-width="1.2" fill="none"/><circle cx="7.5" cy="5" r="2.6" stroke="#b9b8bd" stroke-width="1.1" fill="none"/><path d="M7.5 3.6V5.2H8.8" stroke="#b9b8bd" stroke-width=".9" fill="none"/></svg>
<div class="a" style="left:102.1px;top:490.7px;width:13px;height:12.8px;background:#4caf51;border-radius:2px"></div>
<div class="a" style="left:164.8px;top:490.7px;width:158px;height:14.3px;background:#94e2a7;border-radius:7.2px"></div>
<div class="a" style="left:164.8px;top:490.7px;width:126.4px;height:14.3px;background:#4caf51;border-radius:7.2px"></div>
<div class="t" style="transform:scaleX(1.0386);transform-origin:0 0;left:173.20px;top:493px;font-size:10.4px;font-weight:normal;color:#fff;">80%</div>
<div class="t" style="transform:scaleX(0.9518);transform-origin:0 0;left:338.80px;top:490px;font-size:11px;font-weight:normal;color:#2e2a3a;-webkit-text-stroke:.3px #2e2a3a;">Dallas Strategy</div>
<div class="t" style="transform:scaleX(0.9203);transform-origin:0 0;left:596.80px;top:491px;font-size:11px;font-weight:normal;color:#2f7ae5;-webkit-text-stroke:.25px #2f7ae5;">Peter</div>
<div class="t" style="transform:scaleX(0.9477);transform-origin:0 0;left:659.20px;top:490px;font-size:11px;font-weight:normal;color:#2c2c30;-webkit-text-stroke:.3px #2c2c30;">D - Major Renovation</div>
<div class="t" style="left:781.20px;top:490px;font-size:11px;font-weight:normal;color:#2c2c30;-webkit-text-stroke:.3px #2c2c30;transform:scaleX(0.95);transform-origin:0 0;">Post Completion Changes</div>
<div class="a" style="left:26.5px;top:512.5px;width:1063.5px;height:31px;background:#f4f5f8"></div>
<div class="a" style="left:26.5px;top:512.5px;width:1063.5px;height:1px;background:#e2e2e6"></div>
<svg class="a" style="left:36.5px;top:523.5px;" width="10" height="7" viewBox="0 0 10 7"><path d="M1 1.2L5 5.2L9 1.2" stroke="#3a3840" stroke-width="1.4" fill="none"/></svg>
<div class="t" style="transform:scaleX(0.9259);transform-origin:0 0;left:73.40px;top:523px;font-size:9.8px;font-weight:bold;color:#2d2344;">Scoping &amp; Test Fits</div>
<div class="t" style="transform:scaleX(0.9590);transform-origin:0 0;left:161.70px;top:523px;font-size:9.8px;font-weight:normal;color:#4a4060;-webkit-text-stroke:.2px #4a4060;">(1 project)</div>
<div class="a" style="left:26.5px;top:543.5px;width:1063.5px;height:27.5px;background:#fffdf7"></div>
<div class="a" style="left:26.5px;top:543.5px;width:1063.5px;height:1px;background:#e6e4e7"></div>
<div class="a" style="left:160.5px;top:543.5px;width:1px;height:27.5px;background:#e8e6e8"></div>
<div class="a" style="left:333.3px;top:543.5px;width:1px;height:27.5px;background:#e8e6e8"></div>
<div class="a" style="left:590.7px;top:543.5px;width:1px;height:27.5px;background:#e8e6e8"></div>
<div class="a" style="left:653.2px;top:543.5px;width:1px;height:27.5px;background:#e8e6e8"></div>
<div class="a" style="left:775.8px;top:543.5px;width:1px;height:27.5px;background:#e8e6e8"></div>
<div class="a" style="left:920.5px;top:543.5px;width:1px;height:27.5px;background:#e8e6e8"></div>
<div class="a" style="left:983.4px;top:543.5px;width:1px;height:27.5px;background:#e8e6e8"></div>
<div class="a" style="left:32.3px;top:546.5px;width:4.8px;height:23px;background:#fde7b8;border-radius:2.4px"></div>
<svg class="a" style="left:63px;top:552.5px;" width="13" height="11" viewBox="0 0 13 11"><path d="M2 9.8L2.6 7.2L9 0.8Q9.7 .2 10.4 .8L11.2 1.6Q11.8 2.3 11.2 3L4.8 9.4L2.2 10Z" stroke="#b9b8bd" stroke-width="1.1" fill="none" stroke-linejoin="round"/><path d="M8.2 1.8L10.2 3.8" stroke="#b9b8bd" stroke-width="1"/></svg>
<svg class="a" style="left:79.5px;top:553.5px;" width="15" height="10" viewBox="0 0 15 10"><path d="M1 5Q7.5 -1.5 14 5Q7.5 11.5 1 5Z" stroke="#b9b8bd" stroke-width="1.2" fill="none"/><circle cx="7.5" cy="5" r="2.6" stroke="#b9b8bd" stroke-width="1.1" fill="none"/><path d="M7.5 3.6V5.2H8.8" stroke="#b9b8bd" stroke-width=".9" fill="none"/></svg>
<div class="a" style="left:102.1px;top:549.2px;width:13px;height:12.8px;background:#fdbb3d;border-radius:2px"></div>
<div class="a" style="left:164.8px;top:549.2px;width:158px;height:14.3px;background:#94e2a7;border-radius:7.2px"></div>
<div class="a" style="left:164.8px;top:549.2px;width:8.5px;height:14.3px;background:#4caf51;border-radius:50%"></div>
<div class="t" style="transform:scaleX(0.9514);transform-origin:0 0;left:173.70px;top:551px;font-size:10.4px;font-weight:normal;color:#62bd6e;">0%</div>
<div class="t" style="transform:scaleX(0.9403);transform-origin:0 0;left:338.80px;top:549px;font-size:11px;font-weight:normal;color:#2e2a3a;-webkit-text-stroke:.3px #2e2a3a;">Tea Drive Down Size</div>
<div class="t" style="transform:scaleX(0.9203);transform-origin:0 0;left:596.80px;top:549px;font-size:11px;font-weight:normal;color:#2f7ae5;-webkit-text-stroke:.25px #2f7ae5;">Peter</div>
<div class="t" style="transform:scaleX(0.9477);transform-origin:0 0;left:659.20px;top:549px;font-size:11px;font-weight:normal;color:#2c2c30;-webkit-text-stroke:.3px #2c2c30;">D - Major Renovation</div>
<div class="t" style="left:781.20px;top:549px;font-size:11px;font-weight:normal;color:#2c2c30;-webkit-text-stroke:.3px #2c2c30;transform:scaleX(0.95);transform-origin:0 0;">Scoping &amp; Test Fits</div>
<div class="a" style="left:26.5px;top:571.0px;width:1063.5px;height:31px;background:#f4f5f8"></div>
<div class="a" style="left:26.5px;top:571.0px;width:1063.5px;height:1px;background:#e2e2e6"></div>
<svg class="a" style="left:36.5px;top:582.0px;" width="10" height="7" viewBox="0 0 10 7"><path d="M1 1.2L5 5.2L9 1.2" stroke="#3a3840" stroke-width="1.4" fill="none"/></svg>
<div class="t" style="transform:scaleX(0.9530);transform-origin:0 0;left:73.40px;top:581px;font-size:9.8px;font-weight:bold;color:#2d2344;">Pre DD Briefing</div>
<div class="t" style="transform:scaleX(0.9582);transform-origin:0 0;left:146.70px;top:581px;font-size:9.8px;font-weight:normal;color:#4a4060;-webkit-text-stroke:.2px #4a4060;">(2 Project)</div>
<div class="a" style="left:26.5px;top:282px;width:1px;height:316px;background:#e3e3e7"></div>
<div class="a" style="left:0px;top:598.5px;width:1097px;height:31.5px;background:linear-gradient(#f7f7f9,#ececef);border-top:1px solid #e2e2e6"></div>
<div class="a" style="left:14px;top:597.5px;width:157px;height:2.3px;background:#1a63ee"></div>
<div class="t" style="transform:scaleX(0.9813);transform-origin:0 0;left:27.00px;top:608px;font-size:10.9px;font-weight:bold;color:#2f2d34;">My Projects</div>
<div class="t" style="transform:scaleX(1.0287);transform-origin:0 0;left:184.50px;top:608px;font-size:10.9px;font-weight:normal;color:#77757c;">Rebaseline Requests</div>
<div class="a" style="left:0px;top:629px;width:1097px;height:1px;background:#d6d6da"></div>
</div>
<div class="a" style="left:1.5px;top:6px;width:5px;height:618px;background:linear-gradient(to right,rgba(0,0,0,.07),rgba(0,0,0,0))"></div>
<div class="a" style="left:5px;top:0px;width:1086px;height:1.4px;background:#56606a"></div>
<div class="a" style="left:0px;top:6px;width:1.5px;height:618px;background:#1a1a1a;border-bottom-left-radius:3px"></div>

<div class="a" style="left:857.2px;top:319px;width:334.2px;height:413px;border-radius:9px;overflow:hidden;box-shadow:0 0 8px rgba(0,0,0,.12)">
<svg class="a" style="left:0;top:0" width="334.2" height="413" viewBox="857.2 319 334.2 413"><rect x="857.2" y="319" width="334.2" height="413" fill="#e3eac6"/><path d="M857 319H925L935 332L950 350L965 366L977 383.5H892L880 375L857 365Z" fill="#e1eac0"/><path d="M890 490L960 560L985 600L1000 598L960 545L925 505Z" fill="#e8e8d2" opacity=".8"/><path d="M1090 319H1191V383H1150L1130 380L1090 383Z" fill="#e4ebc6"/><path d="M857.0 371.0 L859.0 374.0 L862.0 376.0 L861.0 378.0 L866.0 381.0 L870.0 384.0 L874.0 386.0 L879.0 390.0 L881.0 391.5 L884.0 398.0 L887.0 420.0 L885.0 455.0 L881.0 485.0 L881.6 493.5 L886.0 500.5 L893.0 512.0 L903.0 535.0 L914.9 555.0 L917.5 563.7 L927.2 567.2 L934.2 572.5 L946.0 587.0 L955.2 598.0 L957.7 600.1 L962.2 614.2 L969.2 620.6 L977.6 629.6 L976.3 636.0 L969.2 636.7 L974.4 642.4 L980.8 646.3 L988.5 650.1 L993.6 654.0 L994.9 664.2 L1001.3 670.6 L1010.3 677.0 L1014.7 685.4 L1019.9 682.2 L1012.8 672.6 L1007.7 666.8 L1001.3 651.4 L996.2 645.6 L988.5 632.2 L982.0 623.2 L973.1 613.6 L970.5 601.4 L969.9 598.8 L976.0 598.0 L985.9 601.4 L991.0 616.8 L993.6 621.9 L992.3 624.5 L1000.0 628.3 L1009.0 636.0 L1011.5 642.4 L1019.2 647.6 L1021.8 654.0 L1029.5 661.7 L1033.6 667.2 L1044.0 679.1 L1052.9 691.0 L1057.6 708.4 L1069.0 727.0 L1073.8 733.0 L857.0 733.0Z" stroke="#e8e9d3" stroke-width="8" fill="none" stroke-linejoin="round"/><path d="M1191.0 614.5 L1182.0 615.0 L1170.7 616.0 L1157.0 617.0 L1150.0 616.5 L1143.0 623.0 L1136.0 630.0 L1129.0 643.8 L1131.5 657.7 L1129.0 673.8 L1127.0 690.0 L1131.5 703.8 L1143.0 717.6 L1152.0 727.0 L1161.0 733.0 L1191.0 733.0Z" stroke="#e6e9d0" stroke-width="6" fill="none" stroke-linejoin="round"/><path d="M857.0 371.0 L859.0 374.0 L862.0 376.0 L861.0 378.0 L866.0 381.0 L870.0 384.0 L874.0 386.0 L879.0 390.0 L881.0 391.5 L884.0 398.0 L887.0 420.0 L885.0 455.0 L881.0 485.0 L881.6 493.5 L886.0 500.5 L893.0 512.0 L903.0 535.0 L914.9 555.0 L917.5 563.7 L927.2 567.2 L934.2 572.5 L946.0 587.0 L955.2 598.0 L957.7 600.1 L962.2 614.2 L969.2 620.6 L977.6 629.6 L976.3 636.0 L969.2 636.7 L974.4 642.4 L980.8 646.3 L988.5 650.1 L993.6 654.0 L994.9 664.2 L1001.3 670.6 L1010.3 677.0 L1014.7 685.4 L1019.9 682.2 L1012.8 672.6 L1007.7 666.8 L1001.3 651.4 L996.2 645.6 L988.5 632.2 L982.0 623.2 L973.1 613.6 L970.5 601.4 L969.9 598.8 L976.0 598.0 L985.9 601.4 L991.0 616.8 L993.6 621.9 L992.3 624.5 L1000.0 628.3 L1009.0 636.0 L1011.5 642.4 L1019.2 647.6 L1021.8 654.0 L1029.5 661.7 L1033.6 667.2 L1044.0 679.1 L1052.9 691.0 L1057.6 708.4 L1069.0 727.0 L1073.8 733.0 L857.0 733.0Z" fill="#76cdef"/><path d="M1191.0 614.5 L1182.0 615.0 L1170.7 616.0 L1157.0 617.0 L1150.0 616.5 L1143.0 623.0 L1136.0 630.0 L1129.0 643.8 L1131.5 657.7 L1129.0 673.8 L1127.0 690.0 L1131.5 703.8 L1143.0 717.6 L1152.0 727.0 L1161.0 733.0 L1191.0 733.0Z" fill="#76cdef"/><path d="M876.0 375.0 L881.0 376.0 L886.0 380.0 L892.0 383.0 L896.0 386.0 L900.0 391.0 L897.0 395.0 L891.0 392.0 L886.0 386.0 L880.0 381.0 L876.0 378.0Z" fill="#76cdef"/><path d="M857.0 356.0 L861.6 359.0 L861.0 362.5 L857.0 363.0Z" fill="#76cdef"/><path d="M1115.0 319.0 L1126.0 319.0 L1128.0 327.0 L1132.0 336.0 L1138.0 346.0 L1141.0 354.0 L1140.5 362.0 L1137.5 365.0 L1135.5 356.0 L1130.0 346.0 L1124.0 336.0 L1118.0 327.0Z" fill="#76cdef"/><path d="M1097.0 321.0 L1106.0 322.5 L1108.0 331.0 L1109.0 341.0 L1117.0 344.5 L1121.0 352.0 L1126.0 361.0 L1124.0 366.0 L1119.0 364.0 L1117.0 356.0 L1112.0 349.0 L1105.5 345.5 L1104.0 334.0 L1099.0 327.0Z" fill="#76cdef"/><path d="M1170.0 360.0 L1174.0 362.0 L1178.0 361.0 L1183.5 358.5 L1181.0 364.0 L1177.0 366.0 L1173.0 365.0Z" fill="#76cdef"/><path d="M1150.0 381.0 L1156.0 374.0 L1163.0 377.0 L1160.0 385.0 L1152.0 386.0Z" fill="#76cdef"/><path d="M1180.0 413.0 L1191.0 402.0 L1191.0 410.0 L1184.0 415.0Z" fill="#76cdef"/><path d="M1101 421Q1103 428 1100 434Q1099 440 1102 444" stroke="#76cdef" stroke-width="1.6" fill="none"/><path d="M1014.7 319.0 L1014.7 383.5" stroke="#c9cfcf" stroke-width="1" fill="none"/><path d="M1093.4 319.0 L1093.4 383.5" stroke="#c9cfcf" stroke-width="1" fill="none"/><path d="M1157.0 319.0 L1151.8 324.0 L1151.8 383.5" stroke="#c9cfcf" stroke-width="1" fill="none"/><path d="M925.0 383.5 L925.0 391.0" stroke="#c9cfcf" stroke-width="1" fill="none"/><path d="M949.7 383.5 L949.7 391.0" stroke="#c9cfcf" stroke-width="1" fill="none"/><path d="M958.0 383.5 L958.0 391.0" stroke="#c9cfcf" stroke-width="1" fill="none"/><path d="M1069.3 383.5 L1069.3 391.0" stroke="#c9cfcf" stroke-width="1" fill="none"/><path d="M1132.4 383.4 L1135.0 410.0 L1139.2 479.7 L1140.0 500.0" stroke="#c9cfcf" stroke-width="1" fill="none"/><path d="M1092.0 424.7 L1130.0 424.7" stroke="#c9cfcf" stroke-width="1" fill="none"/><path d="M1139.0 456.8 L1187.0 456.8" stroke="#c9cfcf" stroke-width="1" fill="none"/><path d="M1091.0 462.5 L1137.0 462.5" stroke="#c9cfcf" stroke-width="1" fill="none"/><path d="M922.8 493.5 L922.8 512.8 L958.0 548.0" stroke="#c9cfcf" stroke-width="1" fill="none"/><path d="M977.2 493.5 L977.2 541.0" stroke="#c9cfcf" stroke-width="1" fill="none"/><path d="M977.2 534.7 L1000.0 534.7" stroke="#c9cfcf" stroke-width="1" fill="none"/><path d="M1023.4 493.0 L1023.4 598.4" stroke="#c9cfcf" stroke-width="1" fill="none"/><path d="M1088.3 493.0 L1088.3 535.4" stroke="#c9cfcf" stroke-width="1" fill="none"/><path d="M960.0 535.4 L1157.6 535.4" stroke="#c9cfcf" stroke-width="1" fill="none"/><path d="M1079.0 535.4 L1079.0 591.0" stroke="#c9cfcf" stroke-width="1" fill="none"/><path d="M1079.6 541.0 L1106.0 541.0" stroke="#c9cfcf" stroke-width="1" fill="none"/><path d="M1106.0 541.0 L1106.0 563.0 L1120.0 566.0 L1157.0 566.0" stroke="#c9cfcf" stroke-width="1" fill="none"/><path d="M1157.0 493.0 L1157.0 580.0" stroke="#c9cfcf" stroke-width="1" fill="none"/><path d="M1147.0 493.0 L1185.0 493.0" stroke="#c9cfcf" stroke-width="1" fill="none"/><path d="M1157.0 580.0 L1191.0 580.0" stroke="#c9cfcf" stroke-width="1" fill="none"/><path d="M1046.0 590.8 L1078.4 590.8" stroke="#c9cfcf" stroke-width="1" fill="none"/><path d="M1023.5 570.0 L1023.5 599.0" stroke="#c9cfcf" stroke-width="1" fill="none"/><path d="M1078.4 570.0 L1078.4 590.8" stroke="#c9cfcf" stroke-width="1" fill="none"/><path d="M1187.0 420.0 L1181.0 470.0 L1185.0 500.0 L1182.0 560.0 L1191.0 600.0" stroke="#c9cfcf" stroke-width="1" fill="none"/><path d="M925.0 319.0 L929.0 321.0 L933.0 326.0 L939.0 331.0 L941.0 334.0 L945.0 335.5 L948.0 340.0 L951.0 343.0 L955.0 346.0 L959.0 351.0 L963.0 355.0 L967.0 361.0 L968.0 366.0 L970.0 370.0 L972.0 375.0 L975.0 383.5" stroke="#9a9c96" stroke-width="1" fill="none"/><path d="M892.0 383.5 L1150.7 383.5 L1155.0 386.0 L1165.0 389.0 L1175.0 391.0 L1191.0 396.0" stroke="#9a9c96" stroke-width="1" fill="none"/><path d="M958.0 586.0 L981.6 590.0 L1003.9 598.2 L1031.3 598.2 L1031.3 593.7 L1047.0 593.7 L1064.6 609.0 L1076.0 623.0 L1083.0 616.0 L1094.6 616.0 L1110.7 639.0 L1115.0 650.7 L1131.5 656.5" stroke="#9a9c96" stroke-width="1" fill="none"/></svg>
</div>
<div class="t" style="transform:scaleX(0.9807);transform-origin:0 0;left:959.00px;top:340px;font-size:10.8px;font-weight:normal;color:#4a4a4a;text-shadow:0 0 2px #fff,0 0 2px #fff">Calgary</div>
<div class="a" style="left:975.4px;top:352.4px;width:3.6px;height:3.6px;background:#111;border-radius:50%"></div>
<div class="t" style="transform:scaleX(0.9503);transform-origin:0 0;left:869.20px;top:365px;font-size:10.8px;font-weight:normal;color:#4a4a4a;text-shadow:0 0 2px #fff,0 0 2px #fff">Vancouver</div>
<div class="a" style="left:891.4px;top:377.8px;width:3.6px;height:3.6px;background:#111;border-radius:50%"></div>
<div class="t" style="transform:scaleX(0.9583);transform-origin:0 0;left:943.80px;top:531px;font-size:10.5px;font-weight:normal;color:#4a4a4a;text-shadow:0 0 2px #fff,0 0 2px #fff">Las Vegas</div>
<div class="a" style="left:965.2px;top:543.1px;width:3.6px;height:3.6px;background:#111;border-radius:50%"></div>
<div class="t" style="transform:scaleX(1.0419);transform-origin:0 0;left:1108.00px;top:604px;font-size:10.5px;font-weight:normal;color:#4a4a4a;text-shadow:0 0 2px #fff,0 0 2px #fff">Ho</div>
<div class="a" style="left:1147.8px;top:613.1px;width:3.6px;height:3.6px;background:#111;border-radius:50%"></div>
<div class="t" style="transform:scaleX(0.9674);transform-origin:0 0;left:1088.30px;top:498px;font-size:13px;font-weight:normal;color:#333;text-shadow:0 0 2px #fff,0 0 2px #fff;-webkit-text-stroke:.45px #333">United States</div>
<div class="t" style="transform:scaleX(1.0562);transform-origin:0 0;left:1064.60px;top:666px;font-size:11.6px;font-weight:normal;color:#333;text-shadow:0 0 2px #fff,0 0 2px #fff;-webkit-text-stroke:.45px #333">Mexico</div>
<div class="a" style="left:857.2px;top:319px;width:334.2px;height:413px;border-radius:9px;overflow:hidden"><div class="t" style="transform:scaleX(0.9767);transform-origin:0 0;left:231.60px;top:407px;font-size:10.5px;font-weight:normal;color:#4a4a4a;text-shadow:0 0 2px #fff,0 0 2px #fff">Mexico City</div></div>
<svg class="a" style="left:1109px;top:715px;" width="11" height="11" viewBox="0 0 11 11"><circle cx="5.5" cy="5.5" r="4.2" stroke="#333" stroke-width="1.2" fill="#fff"/><circle cx="5.5" cy="5.5" r="2" fill="#333"/></svg>
<svg class="a" style="left:1119px;top:408px;filter:drop-shadow(0 1px 3px rgba(0,0,0,.18))" width="37" height="50" viewBox="0 0 37 50"><path d="M18.2 46.8Q6 31 2.9 23.5A16 16 0 1 1 33.5 23.5Q30.4 31 18.2 46.8Z" fill="#f5a898" stroke="#fff" stroke-width="1.6" stroke-linejoin="round"/><circle cx="18.2" cy="18.8" r="11.4" fill="#fff"/><path d="M13 21.5Q11.5 15.5 16.5 13Q21 11.5 23.5 15.5L22.5 17Q19.5 15.5 17.5 17.5Q16.8 20 18 22.5L15.5 24Z" fill="#6a686e"/><path d="M17 15Q20.5 13.5 22.8 16" stroke="#fff" stroke-width=".9" fill="none"/><path d="M16.5 24.5H23" stroke="#9a989e" stroke-width=".9"/></svg>
<div class="a" style="left:863.4px;top:391px;width:228px;height:102px;background:#fff;border-radius:9px;box-shadow:0 1px 4px rgba(0,0,0,.12)"></div>
<svg class="a" style="left:905px;top:492px;" width="22" height="10" viewBox="0 0 22 10"><path d="M0 0L11 8.5L22 0Z" fill="#fff"/></svg>
<div class="t" style="transform:scaleX(0.9452);transform-origin:0 0;left:873.50px;top:404px;font-size:10.6px;font-weight:bold;color:#3a3a3c;">Front Office - Corporate</div>
<div class="t" style="transform:scaleX(0.9356);transform-origin:0 0;left:873.50px;top:419px;font-size:11px;font-weight:normal;color:#555458;">Pre DD Briefing</div>
<div class="a" style="left:873.5px;top:436.5px;width:208px;height:1px;background:#dfdfe2"></div>
<div class="t" style="transform:scaleX(0.9992);transform-origin:0 0;left:873.50px;top:444px;font-size:8.8px;font-weight:normal;color:#6a696e;">CA-PALO ALTO (TBD), PALO ALTO, CA 88507</div>
<svg class="a" style="left:879.3px;top:466.5px;" width="12.5" height="9.5" viewBox="0 0 12.5 9.5"><path d="M0.4 4.7Q6.2 -1.6 12 4.7Q6.2 11 0.4 4.7Z" fill="#4a484e"/><circle cx="6.2" cy="4.7" r="2.7" fill="#d8d7da"/><circle cx="6.2" cy="4.7" r="1.5" fill="#4a484e"/></svg>
<svg class="a" style="left:903.5px;top:465px;" width="13.5" height="13.5" viewBox="0 0 13.5 13.5"><path d="M1.4 12.1L1.7 9L8.9 1.8Q9.7 1 10.5 1.8L11.7 3Q12.5 3.8 11.7 4.6L4.5 11.8Z" stroke="#4a484e" stroke-width="1.35" fill="none" stroke-linejoin="round"/><path d="M8 2.7L10.8 5.5" stroke="#4a484e" stroke-width="1.1"/></svg>
<svg class="a" style="left:928.5px;top:465px;" width="13" height="13" viewBox="0 0 13 13"><path d="M6.5 12.4V7.8Q6.5 5.6 3.5 5.3M6.5 7.8Q6.5 4.6 9.6 3.2" stroke="#4a484e" stroke-width="1.4" fill="none"/><path d="M0.4 5.3L3.8 2.6V8Z" fill="#4a484e"/><path d="M12.4 1.2L8.3 1.5L10.9 5Z" fill="#4a484e"/></svg>
<div class="a" style="left:873.8px;top:501.3px;width:54.4px;height:54.4px;background:#fff;border-radius:50%"></div>
<div class="a" style="left:876.4px;top:503.9px;width:49.2px;height:49.2px;background:#0552cf;border-radius:50%"></div>
<div class="t" style="transform:scaleX(0.9231);transform-origin:0 0;left:897.25px;top:522px;font-size:14.6px;font-weight:bold;color:#fff;">2</div>
<div class="a" style="left:931.5999999999999px;top:547.0px;width:54.4px;height:54.4px;background:#fff;border-radius:50%"></div>
<div class="a" style="left:934.1999999999999px;top:549.6px;width:49.2px;height:49.2px;background:#0552cf;border-radius:50%"></div>
<div class="t" style="transform:scaleX(0.9231);transform-origin:0 0;left:955.05px;top:567px;font-size:14.6px;font-weight:bold;color:#fff;">6</div>
<div class="a" style="left:1107.3999999999999px;top:561.0px;width:54.4px;height:54.4px;background:#fff;border-radius:50%"></div>
<div class="a" style="left:1110.0px;top:563.6px;width:49.2px;height:49.2px;background:#0552cf;border-radius:50%"></div>
<div class="t" style="transform:scaleX(0.8745);transform-origin:0 0;left:1127.85px;top:581px;font-size:14.6px;font-weight:bold;color:#fff;">11</div>
<div class="a" style="left:1146.5px;top:621.6px;width:30.6px;height:30.6px;background:#fff;border-radius:50%;box-shadow:0 0 0 1px rgba(0,0,0,.08)"></div>
<svg class="a" style="left:1154px;top:627px;" width="15" height="20" viewBox="0 0 15 20"><path d="M7.5 1.6L11.3 9.6H3.7Z" fill="#e2401c"/><path d="M7.5 18.4L11.3 10.4H3.7Z" fill="#5b5a60"/></svg>
<div class="a" style="left:1146.5px;top:661.3px;width:30.6px;height:62px;background:#fff;border-radius:15.3px;box-shadow:0 0 0 1px rgba(0,0,0,.08)"></div>
<div class="a" style="left:1146.5px;top:691.3px;width:30.6px;height:1px;background:#c9c9cc"></div>
<svg class="a" style="left:1154.5px;top:669px;" width="14" height="14" viewBox="0 0 14 14"><path d="M7 .5V13.5M.5 7H13.5" stroke="#5a595e" stroke-width="1.7"/></svg>
<div class="a" style="left:1155px;top:706px;width:13px;height:1.8px;background:#5a595e"></div>
</body></html>
